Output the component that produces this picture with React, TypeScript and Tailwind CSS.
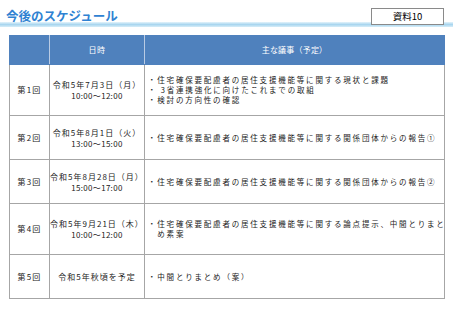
import React from 'react';

type Meeting = {
  no: string;
  date: string;
  time?: string;
  items: string[];
  height: string;
};

const meetings: Meeting[] = [
  {
    no: '第1回',
    date: '令和5年7月3日（月）',
    time: '10:00～12:00',
    items: [
      '住宅確保要配慮者の居住支援機能等に関する現状と課題',
      ' 3省連携強化に向けたこれまでの取組',
      '検討の方向性の確認',
    ],
    height: 'h-[51px]',
  },
  {
    no: '第2回',
    date: '令和5年8月1日（火）',
    time: '13:00～15:00',
    items: ['住宅確保要配慮者の居住支援機能等に関する関係団体からの報告①'],
    height: 'h-[44px]',
  },
  {
    no: '第3回',
    date: '令和5年8月28日（月）',
    time: '15:00～17:00',
    items: ['住宅確保要配慮者の居住支援機能等に関する関係団体からの報告②'],
    height: 'h-[44px]',
  },
  {
    no: '第4回',
    date: '令和5年9月21日（木）',
    time: '10:00～12:00',
    items: ['住宅確保要配慮者の居住支援機能等に関する論点提示、中間とりまと\nめ素案'],
    height: 'h-[51px]',
  },
  {
    no: '第5回',
    date: '令和5年秋頃を予定',
    items: ['中間とりまとめ（案）'],
    height: 'h-[44px]',
  },
];

export default function App() {
  return (
    <div className="w-[453px] h-[320px] bg-white text-[#222] font-['Noto_Sans_CJK_JP',sans-serif] overflow-hidden">
      {/* title bar with the light blue band underneath */}
      <div className="h-[27px] flex justify-between items-start pt-[8px] pl-[6px] pr-[9px] bg-[linear-gradient(to_bottom,#e4f3fb,#a9d6ef_50%,#d6edf8)] bg-no-repeat bg-bottom bg-[length:100%_5px]">
        <h1 className="text-[12.5px] leading-[15px] font-bold text-[#2f82d2]">
          今後のスケジュール
        </h1>
        <div className="w-[73px] h-[17px] border border-[#8a8a8a] bg-white flex items-center justify-center text-[9.5px] leading-none text-black">
          資料10
        </div>
      </div>

      <table className="mt-[8px] ml-[9px] w-[435px] border-collapse table-fixed text-[8px]">
        <colgroup>
          <col className="w-[40px]" />
          <col className="w-[95px]" />
          <col className="w-[300px]" />
        </colgroup>
        <thead>
          <tr className="h-[29px] bg-[#4f81bd] text-white">
            <th className="border border-[#4f81bd] border-r-[#b9cbe4] font-normal" />
            <th className="border border-[#4f81bd] border-r-[#b9cbe4] font-normal tracking-[0.4px]">
              日時
            </th>
            <th className="border border-[#4f81bd] font-normal tracking-[0.2px]">
              主な議事（予定）
            </th>
          </tr>
        </thead>
        <tbody>
          {meetings.map((m) => (
            <tr key={m.no} className={m.height}>
              <td className="border border-[#a6a6a6] text-center tracking-[1.2px]">
                {m.no}
              </td>
              <td className="border border-[#a6a6a6] text-center">
                <div className="tracking-[1px] leading-[11px]">{m.date}</div>
                {m.time && (
                  <div className="leading-[11px] tracking-[0.3px]">{m.time}</div>
                )}
              </td>
              <td className="border border-[#a6a6a6] pl-[3px] pr-[4px] text-[7.5px] tracking-[1.8px] leading-[10px]">
                {m.items.map((item) => (
                  <div key={item} className="pl-[9.3px] -indent-[9.3px] whitespace-pre">
                    ・{item}
                  </div>
                ))}
              </td>
            </tr>
          ))}
        </tbody>
      </table>
    </div>
  );
}
